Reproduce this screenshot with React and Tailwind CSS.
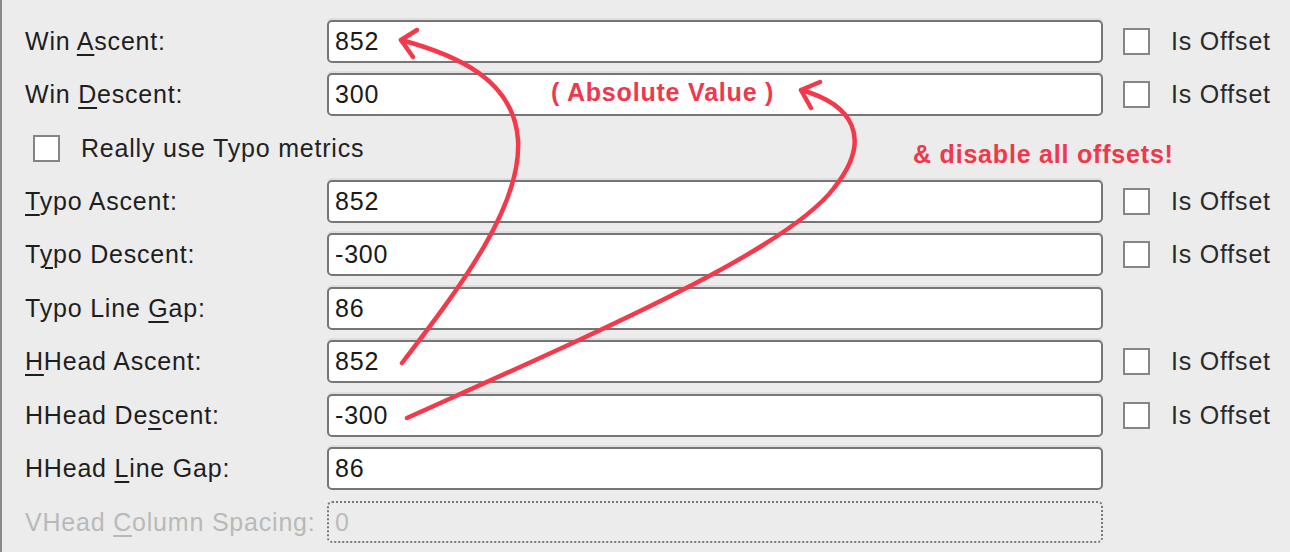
import React from "react";

const rows = [
  { label: ["Win ", "A", "scent:"], value: "852", offset: true },
  { label: ["Win ", "D", "escent:"], value: "300", offset: true },
  { check: "Really use Typo metrics" },
  { label: ["", "T", "ypo Ascent:"], value: "852", offset: true },
  { label: ["T", "y", "po Descent:"], value: "-300", offset: true },
  { label: ["Typo Line ", "G", "ap:"], value: "86" },
  { label: ["", "H", "Head Ascent:"], value: "852", offset: true },
  { label: ["HHead De", "s", "cent:"], value: "-300", offset: true },
  { label: ["HHead ", "L", "ine Gap:"], value: "86" },
  { label: ["VHead ", "C", "olumn Spacing:"], value: "0", disabled: true },
];

const Box = () => (
  <span className="block w-[27px] h-[27px] border-2 border-[#858585] bg-white" />
);

const Label = ({ parts, disabled }) => (
  <span className={disabled ? "text-[#b9b9b9]" : "text-[#1e1e1e]"}>
    {parts[0]}
    <span className="underline underline-offset-[4px] decoration-[1.5px]">{parts[1]}</span>
    {parts[2]}
  </span>
);

const Row = ({ row }) => {
  if (row.check) {
    return (
      <div className="flex items-center h-[53.45px] pl-[8px]">
        <Box />
        <span className="ml-[21px] text-[#222]">{row.check}</span>
      </div>
    );
  }
  return (
    <div className="flex items-center h-[53.45px]">
      <div className="w-[302px] shrink-0 whitespace-nowrap">
        <Label parts={row.label} disabled={row.disabled} />
      </div>
      <div
        className={
          row.disabled
            ? "w-[776px] h-[42px] shrink-0 rounded-[5px] border-2 border-dotted border-[#7a7a7a] flex items-center pl-[6px] text-[#bdbdbd]"
            : "w-[776px] h-[43px] shrink-0 rounded-[5px] border-2 border-[#767676] bg-white flex items-center pl-[6px] text-[#1a1a1a] shadow-[0_-2px_0_#dedede]"
        }
      >
        {row.value}
      </div>
      {row.offset && (
        <div className="flex items-center ml-[20px]">
          <Box />
          <span className="ml-[21px] text-[#2a2a2a]">Is Offset</span>
        </div>
      )}
    </div>
  );
};

export default function App() {
  return (
    <div
      className="relative w-[1290px] h-[552px] overflow-hidden bg-[#ececec] border-l-2 border-[#8a8a8a] text-[25px] tracking-[0.8px] leading-none"
      style={{ fontFamily: '"Liberation Sans", Arial, sans-serif' }}
    >
      <div className="flex flex-col pt-[14.5px] pl-[23px]">
        {rows.map((row, i) => (
          <Row key={i} row={row} />
        ))}
      </div>

      {/* annotations */}
      <span className="absolute left-[549px] top-[80px] text-[25px] font-bold text-[#f0374b] whitespace-nowrap">
        ( Absolute Value )
      </span>
      <span className="absolute left-[911px] top-[142px] text-[25px] font-bold text-[#f0374b] whitespace-nowrap">
        & disable all offsets!
      </span>
      <svg
        className="absolute left-0 top-0 pointer-events-none"
        width="1290"
        height="552"
        viewBox="0 0 1290 552"
        fill="none"
        stroke="#f4394c"
        strokeWidth="4.5"
        strokeLinecap="round"
        strokeLinejoin="round"
      >
        <path d="M400 363 C 460 285 520 205 516 140 C 512 80 455 55 399 40" />
        <path d="M415 30 L 399 40 L 411 57" />
        <path d="M405 418 C 600 330 785 250 832 188 C 872 138 850 104 799 90" />
        <path d="M818 82 L 799 90 L 809 108" />
      </svg>
    </div>
  );
}
